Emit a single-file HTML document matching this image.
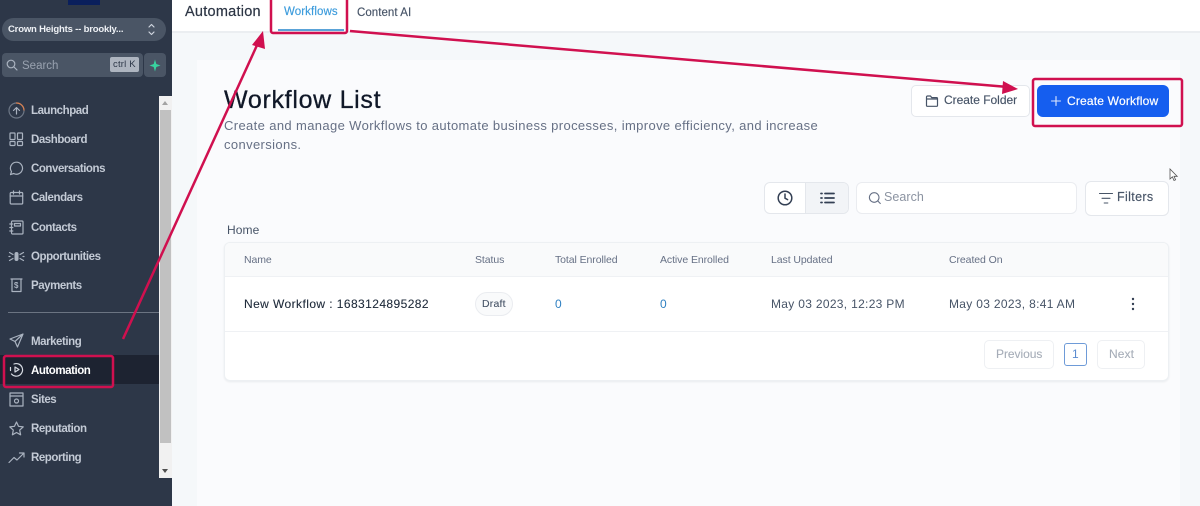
<!DOCTYPE html>
<html><head><meta charset="utf-8">
<style>
*{box-sizing:border-box}
html,body{margin:0;padding:0}
body{width:1200px;height:506px;overflow:hidden;position:relative;background:#f5f8fa;font-family:"Liberation Sans",sans-serif}
.t{position:absolute;white-space:nowrap;line-height:1}
.b{position:absolute}
.nav{color:#c3cad5;font-size:11.5px;font-weight:700;left:31px;letter-spacing:-.45px}
svg.i{position:absolute;fill:none;stroke:#aab3c0;stroke-width:1.2;stroke-linecap:round;stroke-linejoin:round}
.th{font-size:10.5px;color:#667085;top:255px;letter-spacing:-.08px}
.td{font-size:12px;color:#475467;top:298px;letter-spacing:.31px}
</style></head><body>
<!-- header -->
<div class="b" style="left:172px;top:0;width:1028px;height:33px;background:#fff;border-bottom:2px solid #ebeef1"></div>
<div class="t" style="left:185px;top:5px;font-size:14.5px;color:#2c3544;letter-spacing:.25px;-webkit-text-stroke:.2px #2c3544">Automation</div>
<div class="t" style="left:284px;top:7px;font-size:11.5px;color:#3b9bdc;letter-spacing:.1px;-webkit-text-stroke:.15px #3b9bdc">Workflows</div>
<div class="b" style="left:278px;top:29px;width:66px;height:2px;background:#5aa3d8"></div>
<div class="t" style="left:357px;top:8px;font-size:11.5px;color:#475467;letter-spacing:.05px;-webkit-text-stroke:.15px #475467">Content AI</div>
<!-- panel -->
<div class="b" style="left:197px;top:60px;width:983px;height:446px;background:#fafbfd"></div>
<div class="t" style="left:224px;top:88px;font-size:25px;color:#101828;letter-spacing:.7px;-webkit-text-stroke:.3px #101828">Workflow List</div>
<div class="t" style="left:224px;top:119px;font-size:13px;color:#667085;letter-spacing:.37px">Create and manage Workflows to automate business processes, improve efficiency, and increase</div>
<div class="t" style="left:224px;top:138px;font-size:13px;color:#667085;letter-spacing:.37px">conversions.</div>
<!-- buttons -->
<div class="b" style="left:911px;top:85px;width:119px;height:32px;background:#fff;border:1px solid #e4e7ec;border-radius:5px"></div>
<svg class="i" style="left:925px;top:94px;stroke:#475467" width="14" height="14" viewBox="0 0 14 14"><path d="M1.5 11.5V3a1 1 0 0 1 1-1h3l1.2 1.6h4.800a1 1 0 0 1 1 1v6.900a.8.8 0 0 1-.8.8H2.300a.8.8 0 0 1-.8-.8zM1.500 5h11"/></svg>
<div class="t" style="left:944px;top:94px;font-size:12px;color:#475467;letter-spacing:-.02px;-webkit-text-stroke:.15px #475467">Create Folder</div>
<div class="b" style="left:1037px;top:85px;width:132px;height:32px;background:#155eef;border-radius:6px"></div>
<svg class="i" style="left:1050px;top:95px;stroke:#dfe8fd;stroke-width:1.1" width="12" height="12" viewBox="0 0 12 12"><path d="M6 1.500v9M1.500 6h9"/></svg>
<div class="t" style="left:1067px;top:95px;font-size:12px;color:#fff;letter-spacing:.19px;-webkit-text-stroke:.2px #fff">Create Workflow</div>
<!-- toolbar -->
<div class="b" style="left:764px;top:182px;width:85px;height:32px;background:#fff;border:1px solid #e4e7ec;border-radius:6px;overflow:hidden"><div style="position:absolute;left:40px;top:0;width:44px;height:30px;background:#f2f4f7;border-left:1px solid #e4e7ec"></div></div>
<svg class="i" style="left:777px;top:190px;stroke:#344054;stroke-width:1.5" width="16" height="16" viewBox="0 0 16 16"><circle cx="8" cy="8" r="6.800"/><path d="M8 4v4.200l2.600 1.400"/></svg>
<svg class="i" style="left:820px;top:192px;stroke:#344054;stroke-width:1.8" width="15" height="12" viewBox="0 0 15 12"><path d="M5 1.500h9M5 6h9M5 10.500h9M1 1.500h1M1 6h1M1 10.500h1"/></svg>
<div class="b" style="left:856px;top:182px;width:221px;height:32px;background:#fff;border:1px solid #eaecf0;border-radius:6px"></div>
<svg class="i" style="left:868px;top:191px;stroke:#667085;stroke-width:1.1" width="14" height="14" viewBox="0 0 14 14"><circle cx="6.200" cy="6.500" r="4.800"/><path d="M9.800 10l2.500 2.500"/></svg>
<div class="t" style="left:884px;top:191px;font-size:12.5px;color:#8b93a1;letter-spacing:.05px">Search</div>
<div class="b" style="left:1085px;top:181px;width:84px;height:35px;background:#fff;border:1px solid #e4e7ec;border-radius:6px"></div>
<svg class="i" style="left:1099px;top:192px;stroke:#475467;stroke-width:1.1" width="14" height="13" viewBox="0 0 14 13"><path d="M.5 1.500h13M3 6.300h8M5.200 11h3.600"/></svg>
<div class="t" style="left:1117px;top:191px;font-size:12.5px;color:#475467;letter-spacing:.35px;-webkit-text-stroke:.15px #475467">Filters</div>
<div class="t" style="left:227px;top:224px;font-size:12px;color:#475467;letter-spacing:.1px">Home</div>
<!-- table -->
<div class="b" style="left:224px;top:242px;width:945px;height:139px;background:#fff;border:1px solid #edf0f3;border-radius:6px;box-shadow:0 1px 2px rgba(16,24,40,.07);overflow:hidden">
<div style="height:34px;background:#f9fafb;border-bottom:1px solid #eff1f4"></div>
<div style="position:absolute;left:0;right:0;top:88px;border-top:1px solid #eff1f4"></div></div>
<div class="t th" style="left:244px">Name</div>
<div class="t th" style="left:475px">Status</div>
<div class="t th" style="left:555px">Total Enrolled</div>
<div class="t th" style="left:660px">Active Enrolled</div>
<div class="t th" style="left:771px">Last Updated</div>
<div class="t th" style="left:949px">Created On</div>
<div class="t" style="left:244px;top:298px;font-size:12px;color:#1d2939;letter-spacing:.42px;-webkit-text-stroke:.1px #1d2939">New Workflow : 1683124895282</div>
<div class="b" style="left:475px;top:292px;width:38px;height:24px;background:#f9fafb;border:1px solid #eaecf0;border-radius:12px"></div>
<div class="t" style="left:482px;top:299px;font-size:10.5px;color:#475467;letter-spacing:.2px;-webkit-text-stroke:.1px #475467">Draft</div>
<div class="t td" style="left:555px;color:#2f80c2">0</div>
<div class="t td" style="left:660px;color:#2f80c2">0</div>
<div class="t td" style="left:771px">May 03 2023, 12:23 PM</div>
<div class="t td" style="left:949px">May 03 2023, 8:41 AM</div>
<svg class="b" style="left:1131px;top:297px" width="4" height="14" viewBox="0 0 4 14"><g fill="#344054"><circle cx="2" cy="2" r="1.200"/><circle cx="2" cy="7" r="1.200"/><circle cx="2" cy="12" r="1.200"/></g></svg>
<div class="b" style="left:984px;top:340px;width:70px;height:29px;border:1px solid #eef0f3;border-radius:5px;background:#fff"></div>
<div class="t" style="left:996px;top:348px;font-size:12px;color:#a6adb8;letter-spacing:-.05px;-webkit-text-stroke:.1px #a6adb8">Previous</div>
<div class="b" style="left:1064px;top:343px;width:23px;height:23px;border:1px solid #6e9bd8;border-radius:3px;background:#fff"></div>
<div class="t" style="left:1072px;top:348px;font-size:12px;color:#5b8bd0">1</div>
<div class="b" style="left:1097px;top:340px;width:48px;height:29px;border:1px solid #eef0f3;border-radius:5px;background:#fff"></div>
<div class="t" style="left:1109px;top:348px;font-size:12px;color:#a6adb8;letter-spacing:.1px;-webkit-text-stroke:.1px #a6adb8">Next</div>
<!-- cursor -->
<svg class="b" style="left:1169px;top:168px" width="10" height="14" viewBox="0 0 10 14"><path d="M1 1v10l2.400-2.200L5 12.500l1.600-.7L5 8.300h3.200z" fill="#fff" stroke="#555" stroke-width=".8"/></svg>
<!-- sidebar -->
<div class="b" style="left:0;top:0;width:172px;height:506px;background:#2d3748"></div>
<div class="b" style="left:68px;top:0;width:32px;height:5px;background:#0a1f5c"></div>
<div class="b" style="left:2px;top:18px;width:164px;height:23px;background:#4a5565;border-radius:12px"></div>
<div class="t" style="left:8px;top:25px;font-size:9.5px;font-weight:700;color:#eef1f5;letter-spacing:-.18px">Crown Heights -- brookly...</div>
<svg class="i" style="left:147px;top:22px;stroke:#cfd5de" width="9" height="15" viewBox="0 0 9 15"><path d="M2 5l2.500-2.500L7 5M2 10l2.500 2.500L7 10"/></svg>
<div class="b" style="left:2px;top:53px;width:141px;height:24px;background:#4a5565;border-radius:4px"></div>
<div class="b" style="left:144px;top:53px;width:22px;height:24px;background:#4a5565;border-radius:4px"></div>
<svg class="i" style="left:6px;top:59px;stroke:#aab3c0" width="12" height="12" viewBox="0 0 12 12"><circle cx="5" cy="5" r="3.800"/><path d="M8 8l3 3"/></svg>
<div class="t" style="left:22px;top:61px;font-size:11.5px;color:#99a2b0">Search</div>
<div class="b" style="left:110px;top:57px;width:29px;height:15px;background:#aeb5c0;border-radius:2px"></div>
<div class="t" style="left:113px;top:60px;font-size:9.5px;color:#2d3748;letter-spacing:.2px">ctrl K</div>
<svg class="b" style="left:149px;top:59px" width="12" height="13" viewBox="0 0 12 13"><path d="M6 .5L7.300 5 11.500 6.500 7.300 8 6 12.500 4.700 8 .5 6.500 4.700 5z" fill="#38d39f"/></svg>
<div class="t nav" style="top:106px">Launchpad</div>
<div class="t nav" style="top:135px">Dashboard</div>
<div class="t nav" style="top:164px">Conversations</div>
<div class="t nav" style="top:193px">Calendars</div>
<div class="t nav" style="top:223px">Contacts</div>
<div class="t nav" style="top:252px">Opportunities</div>
<div class="t nav" style="top:281px">Payments</div>
<div class="b" style="left:8px;top:312px;width:151px;height:1px;background:#6b7482"></div>
<div class="t nav" style="top:337px">Marketing</div>
<div class="b" style="left:0;top:355px;width:159px;height:29px;background:#1d2331"></div>
<div class="t nav" style="top:366px;color:#fff">Automation</div>
<div class="t nav" style="top:395px">Sites</div>
<div class="t nav" style="top:424px">Reputation</div>
<div class="t nav" style="top:453px">Reporting</div>
<!-- nav icons -->
<svg class="i" style="left:8px;top:102px" width="17" height="17" viewBox="0 0 17 17"><circle cx="8.500" cy="8.500" r="7.500" stroke="#6d7786"/><path d="M8.500 1A7.500 7.500 0 0 1 16 8" stroke="#d98050"/><path d="M5.500 8.500l3-3 3 3M8.500 6v6"/></svg>
<svg class="i" style="left:9px;top:132px" width="15" height="15" viewBox="0 0 15 15"><rect x="1" y="1" width="5" height="6.500" rx=".6"/><rect x="8.500" y="1" width="5" height="6.500" rx=".6"/><rect x="1" y="9.500" width="5" height="4" rx=".6"/><rect x="8.500" y="9.500" width="5" height="4" rx=".6"/></svg>
<svg class="i" style="left:9px;top:161px" width="15" height="15" viewBox="0 0 15 15"><path d="M7.500 1.200a6 6 0 1 1-2.800 11.300L1.500 13.600l1-3A6 6 0 0 1 7.500 1.200z"/></svg>
<svg class="i" style="left:9px;top:190px" width="15" height="15" viewBox="0 0 15 15"><rect x="1.200" y="2.500" width="12.500" height="11.500" rx="1"/><path d="M1.200 6h12.500M4.500 1v3M10.500 1v3"/></svg>
<svg class="i" style="left:9px;top:220px" width="15" height="15" viewBox="0 0 15 15"><rect x="2.500" y="1" width="11.500" height="13" rx="1"/><path d="M.8 4h3M.8 7.500h3M.8 11h3M5.500 3.500h6v2.500h-6z"/></svg>
<svg class="i" style="left:8px;top:249px" width="17" height="15" viewBox="0 0 17 15"><path d="M8.500 5v5" stroke-width="4"/><path d="M5 5.500L1.500 3.500M12 5.500l3.500-2M5 9.500l-3.500 2M12 9.500l3.500 2M1 7.500h1M15 7.500h1"/></svg>
<svg class="i" style="left:10px;top:278px" width="13" height="15" viewBox="0 0 13 15"><path d="M1 1h11M2 1v12.500h9V1"/></svg>
<div class="t" style="left:14px;top:282px;font-size:8px;font-weight:700;color:#aab3c0">$</div>
<svg class="i" style="left:9px;top:333px" width="15" height="15" viewBox="0 0 15 15"><path d="M14 1L1 6l5 2.500L8.500 14zM14 1L6 8.500"/></svg>
<svg class="i" style="left:9px;top:362px;stroke:#d5dae2" width="15" height="15" viewBox="0 0 15 15"><path d="M5 2A6.300 6.300 0 1 1 2.500 12M1.500 5.500v3"/><path d="M6 5l4 2.500L6 10z"/></svg>
<svg class="i" style="left:9px;top:392px" width="15" height="15" viewBox="0 0 15 15"><rect x="1" y="1" width="13" height="13"/><path d="M1 4h13"/><circle cx="7.500" cy="9" r="2"/></svg>
<svg class="i" style="left:9px;top:421px" width="15" height="15" viewBox="0 0 15 15"><path d="M7.500 1l2 4.300 4.700.6-3.500 3.200.9 4.700-4.100-2.300-4.100 2.300.9-4.700L.8 5.900l4.700-.6z"/></svg>
<svg class="i" style="left:8px;top:451px" width="17" height="13" viewBox="0 0 17 13"><path d="M1 11.500l5-5 3 2.500 7-7M11.500 2H16v4"/></svg>
<!-- scrollbar -->
<div class="b" style="left:159px;top:96px;width:13px;height:382px;background:#f1f1f1"></div>
<div class="b" style="left:160px;top:110px;width:11px;height:333px;background:#c1c1c1"></div>
<div class="b" style="left:162px;top:101px;border:3.5px solid transparent;border-bottom:4px solid #a3a3a3;border-top:0"></div>
<div class="b" style="left:162px;top:469px;border:3.5px solid transparent;border-top:4px solid #505050;border-bottom:0"></div>
<!-- annotations -->
<svg class="b" style="left:0;top:0" width="1200" height="506" viewBox="0 0 1200 506" fill="none" stroke="#d0104f">
<rect x="271" y="-3" width="76" height="36" rx="2" stroke-width="2.5"/>
<rect x="4" y="356" width="109" height="31" rx="2" stroke-width="2.5"/>
<rect x="1033" y="79" width="149" height="47" rx="2" stroke-width="2.5"/>
<path d="M123 339L258 43" stroke-width="2.5"/>
<path d="M263 31L252 45 265 49z" fill="#d0104f" stroke="none"/>
<path d="M350 31L1008 87" stroke-width="2.5"/>
<path d="M1018 89L1003 81 1002 94z" fill="#d0104f" stroke="none"/>
</svg>
</body></html>
